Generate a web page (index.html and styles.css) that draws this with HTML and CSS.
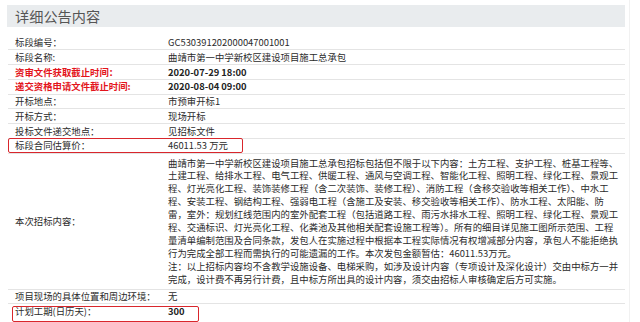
FILE: index.html
```html
<!DOCTYPE html>
<html lang="zh-CN">
<head>
<meta charset="utf-8">
<title>详细公告内容</title>
<link rel="stylesheet" href="styles.css">
</head>
<body>
<div class="page">
  <div class="head">详细公告内容</div>
  <div class="list">
    <div class="row first"><div class="label">标段编号：</div><div class="value">GC530391202000047001001</div></div>
    <div class="row"><div class="label">标段名称:</div><div class="value">曲靖市第一中学新校区建设项目施工总承包</div></div>
    <div class="row"><div class="label red">资审文件获取截止时间：</div><div class="value bold">2020-07-29 18:00</div></div>
    <div class="row"><div class="label red">递交资格申请文件截止时间:</div><div class="value bold">2020-08-04 09:00</div></div>
    <div class="row"><div class="label">开标地点：</div><div class="value">市预审开标1</div></div>
    <div class="row"><div class="label">开标方式：</div><div class="value">现场开标</div></div>
    <div class="row"><div class="label">投标文件递交地点：</div><div class="value">见招标文件</div></div>
    <div class="row"><div class="label">标段合同估算价：</div><div class="value">46011.53 万元</div><span class="mark mark-price"></span></div>
    <div class="row big"><div class="label">本次招标内容：</div><div class="value text">曲靖市第一中学新校区建设项目施工总承包招标包括但不限于以下内容：土方工程、支护工程、桩基工程等、<br>土建工程、给排水工程、电气工程、供暖工程、通风与空调工程、智能化工程、照明工程、绿化工程、景观工<br>程、灯光亮化工程、装饰装修工程（含二次装饰、装修工程）、消防工程（含移交验收等相关工作）、中水工<br>程、安装工程、钢结构工程、强弱电工程（含施工及安装、移交验收等相关工作）、防水工程、太阳能、防<br>雷，室外：规划红线范围内的室外配套工程（包括道路工程、雨污水排水工程、照明工程、绿化工程、景观工<br>程、交通标识、灯光亮化工程、化粪池及其他相关配套设施工程等）。所有的细目详见施工图所示范围、工程<br>量清单编制范围及合同条款，发包人在实施过程中根据本工程实际情况有权增减部分内容，承包人不能拒绝执<br>行为完成全部工程而需执行的可能遗漏的工作。本次发包金额暂估：46011.53万元。<br>注：以上招标内容均不含教学设施设备、电梯采购，如涉及设计内容（专项设计及深化设计）交由中标方一并<br>完成，设计费不再另行计费，且中标方所出具的设计内容，须交由招标人审核确定后方可实施。</div></div>
    <div class="row"><div class="label">项目现场的具体位置和周边环境：</div><div class="value">无</div></div>
    <div class="row last"><div class="label">计划工期(日历天)：</div><div class="value bold">300</div><span class="mark mark-days"></span></div>
  </div>
</div>
</body>
</html>
```
FILE: styles.css
```css
html, body {
  margin: 0;
  padding: 0;
  background: #ffffff;
}
body {
  font-family: "Microsoft YaHei", "Noto Sans CJK SC", "Noto Sans", sans-serif;
  color: #2b2b2b;
  font-size: 9.4px;
}
.page {
  width: 630px;
  height: 322px;
  padding-top: 5px;
  box-sizing: border-box;
  border-right: 1px solid #f1f1f1;
}
.head {
  margin-left: 7px;
  width: 618px;
  height: 22px;
  line-height: 22px;
  background: #e9ecee;
  color: #555555;
  font-size: 14.2px;
  padding-left: 8px;
  box-sizing: border-box;
}
.list {
  margin: 8.5px 0 0 8px;
  width: 617px;
}
.row {
  position: relative;
  display: flex;
  align-items: center;
  border-bottom: 1px solid #e4e4e4;
  line-height: 12.9px;
  padding: 0.45px 0;
  white-space: nowrap;
}
.row.last {
  border-bottom: none;
}
.label {
  width: 160px;
  padding-left: 7px;
  box-sizing: border-box;
  flex: none;
}
.value {
  flex: 1;
}
.red {
  color: #e3141b;
  font-weight: bold;
}
.bold {
  font-weight: bold;
  color: #222222;
}
.row.big {
  padding: 2.8px 0 3px;
}
.text {
  line-height: 12.9px;
}
.mark {
  position: absolute;
  border: 1.5px solid #d9262c;
  border-radius: 2px;
  box-sizing: border-box;
}
.mark-price {
  left: 0;
  top: -0.5px;
  width: 235px;
  height: 15px;
}
.mark-days {
  left: 4px;
  top: 2px;
  width: 187px;
  height: 15.5px;
}
```
